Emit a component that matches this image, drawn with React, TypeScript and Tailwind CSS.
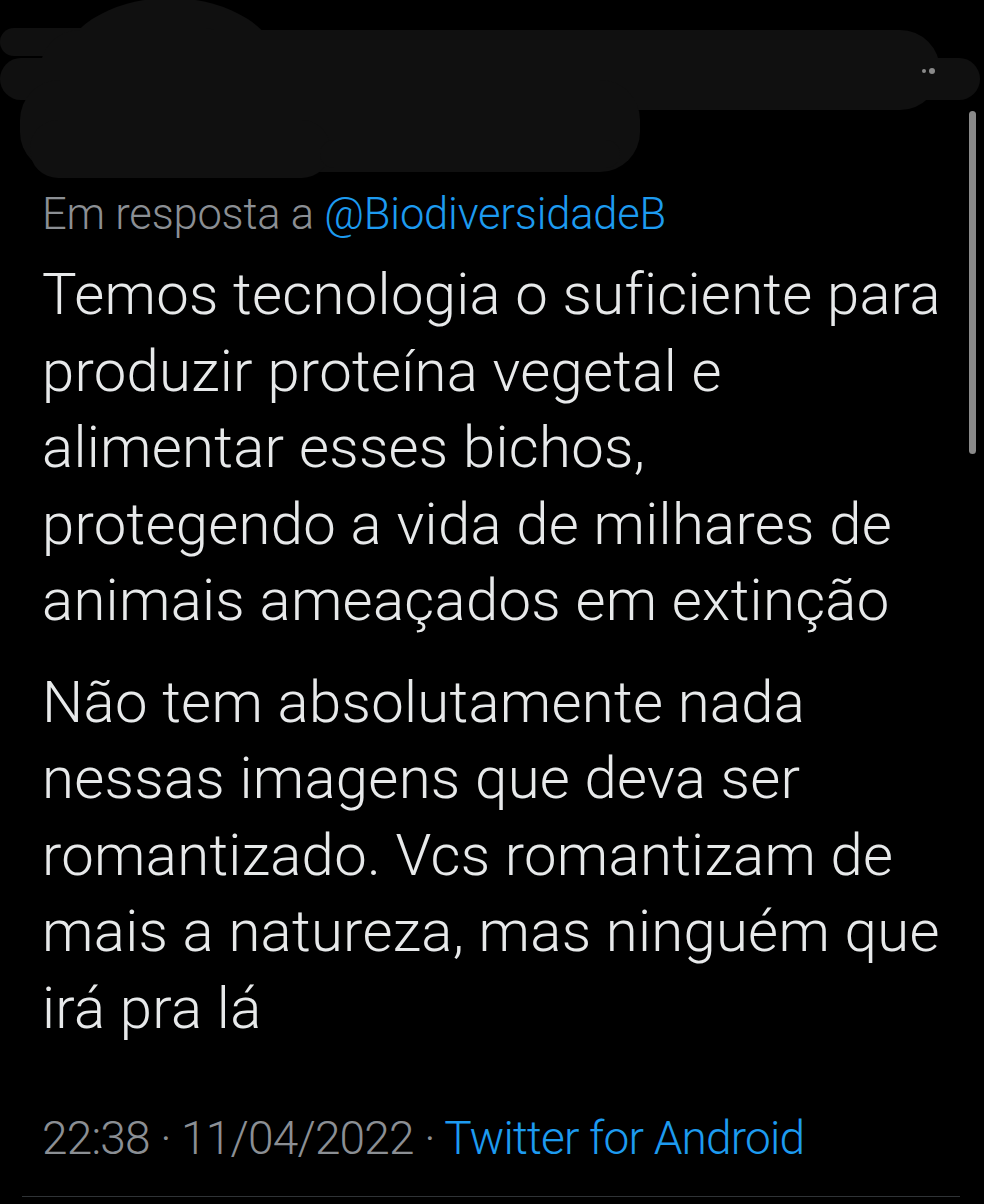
const firstPara = [
  "Temos tecnologia o suficiente para",
  "produzir proteína vegetal e",
  "alimentar esses bichos,",
  "protegendo a vida de milhares de",
  "animais ameaçados em extinção",
];

const secondPara = [
  "Não tem absolutamente nada",
  "nessas imagens que deva ser",
  "romantizado. Vcs romantizam de",
  "mais a natureza, mas ninguém que",
  "irá pra lá",
];

export default function App() {
  return (
    <div className="relative w-[984px] h-[1204px] overflow-hidden bg-black font-['Roboto',sans-serif]">
      {/* redacted header scribble */}
      <svg className="absolute left-0 top-0" width="984" height="190" viewBox="0 0 984 190">
        <g fill="#101010">
          <ellipse cx="170" cy="70" rx="110" ry="72" />
          <rect x="0" y="28" width="220" height="28" rx="14" />
          <rect x="40" y="30" width="900" height="80" rx="40" />
          <rect x="0" y="58" width="980" height="42" rx="21" />
          <rect x="20" y="80" width="620" height="92" rx="40" />
          <rect x="30" y="120" width="300" height="58" rx="28" />
          <rect x="320" y="140" width="300" height="28" rx="14" />
        </g>
        <g fill="#8a8a8a">
          <circle cx="924" cy="71" r="2" />
          <circle cx="932" cy="71" r="3" />
        </g>
      </svg>

      {/* scrollbar */}
      <div className="absolute left-[969px] top-[111px] w-[7px] h-[343px] rounded-full bg-[#8a8a8a]" />

      <div className="relative pt-[188px] pl-[42px] pr-[40px]">
        <div className="text-[43.5px] leading-[54px] font-light text-[#8b8f94] tracking-[-0.2px]">
          Em resposta a <span className="text-[#1d9bf0]">@BiodiversidadeB</span>
        </div>
        <div className="mt-[14px] text-[58px] leading-[76.5px] font-light text-[#e7e9ea] tracking-[0.3px]">
          <p>
            {firstPara.map((line) => (
              <span key={line} className="block whitespace-nowrap">
                {line}
              </span>
            ))}
          </p>
          <p className="mt-[25px]">
            {secondPara.map((line) => (
              <span key={line} className="block whitespace-nowrap">
                {line}
              </span>
            ))}
          </p>
        </div>
        <div className="mt-[64px] text-[46px] leading-[56px] font-light text-[#8b8f94] tracking-[-0.8px]">
          22:38 · 11/04/2022 · <span className="text-[#1d9bf0]">Twitter for Android</span>
        </div>
      </div>
      <div className="absolute left-[22px] top-[1196px] w-[938px] h-px bg-[#2f3336]" />
    </div>
  );
}
